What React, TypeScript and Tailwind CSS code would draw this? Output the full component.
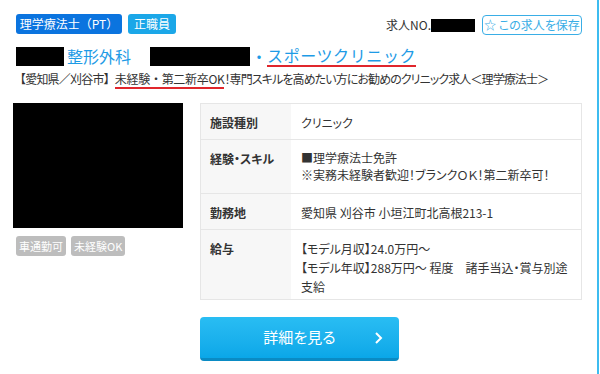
import React from "react";

const font = { fontFamily: '"Noto Sans CJK JP", "Noto Sans", sans-serif' };

function Row({ label, children, h }: { label: string; children: React.ReactNode; h: string }) {
  return (
    <div className={`flex border-b border-[#e6e6e6] last:border-b-0 ${h}`}>
      <div className="w-[90px] shrink-0 bg-[#f7f7f7] pl-[9px] pt-[9px] text-[12px] font-bold leading-[19px] text-[#333]">
        {label}
      </div>
      <div className="flex-1 pl-[10px] pt-[9px] text-[12px] leading-[19px] text-[#333]">{children}</div>
    </div>
  );
}

export default function App() {
  return (
    <div style={font} className="w-[600px] h-[374px] bg-white overflow-hidden [font-feature-settings:'palt']">
      <div className="w-[599px] h-[374px] border-r-2 border-[#3dbcf0] pl-[13px] pr-[15px] pt-[14px]">
        {/* header */}
        <div className="flex items-start justify-between pl-[3px]">
          <div className="flex gap-[6px]">
            <span className="inline-block h-[20px] w-[106px] rounded-[3px] bg-[#0b74df] text-center text-[12px] leading-[20px] text-white [font-feature-settings:normal]">
              理学療法士（PT）
            </span>
            <span className="inline-block h-[20px] w-[48px] rounded-[3px] bg-[#1ba7e8] text-center text-[12px] leading-[20px] text-white">
              正職員
            </span>
          </div>
          <div className="flex items-center gap-[7px] pt-[1px]">
            <div className="flex items-center text-[12px] text-[#333]">
              <span>求人NO.</span>
              <span className="inline-block h-[13px] w-[44px] bg-black" />
            </div>
            <button className="h-[20px] w-[100px] rounded-[4px] border border-[#3aaee6] bg-white text-center text-[12px] leading-[18px] text-[#3aaee6]">
              ☆ この求人を保存
            </button>
          </div>
        </div>

        {/* title */}
        <div className="mt-[10px] flex items-center pl-[3px] text-[16px] leading-[22px] text-[#1e9be6] [font-feature-settings:normal]">
          <span className="inline-block h-[19px] w-[48px] bg-black" />
          <span className="ml-[3px]">整形外科</span>
          <span className="ml-[19px] inline-block h-[19px] w-[100px] bg-black" />
          <span className="ml-[1px]">・</span>
          <span className="border-b-2 border-[#e0262c] leading-[20px] tracking-[0.6px]">スポーツクリニック</span>
        </div>

        {/* subtitle */}
        <div className="mt-[3px] pl-[1px] text-[12px] leading-[18px] text-[#333] whitespace-nowrap">
          <span className="tracking-[-0.8px]">
            <span className="[font-feature-settings:normal]">【</span>愛知県／刈谷市<span className="[font-feature-settings:normal]">】</span>
          </span>
          <span className="border-b-2 border-[#e0262c] tracking-[-0.3px]">
            未経験<span className="[font-feature-settings:normal]">・</span>第二新卒OK
          </span>
          <span className="tracking-[-0.9px]">！専門スキルを高めたい方にお勧めのクリニック求人＜理学療法士＞</span>
        </div>

        {/* main */}
        <div className="mt-[15px] flex gap-[17px]">
          <div className="w-[170px] shrink-0">
            <div className="h-[125px] w-[170px] bg-black" />
            <div className="mt-[8px] flex gap-[5px] pl-[3px]">
              <span className="inline-block h-[20px] rounded-[3px] bg-[#bdbdbd] px-[3px] text-[11px] leading-[20px] text-white">
                車通勤可
              </span>
              <span className="inline-block h-[20px] rounded-[3px] bg-[#bdbdbd] px-[3px] text-[11px] leading-[20px] text-white">
                未経験OK
              </span>
            </div>
          </div>
          <div className="flex w-[382px] flex-col">
            <div className="border border-[#e6e6e6]">
              <Row label="施設種別" h="h-[36px]">
                クリニック
              </Row>
              <Row label="経験・スキル" h="h-[54px]">
                <div className="leading-[17px]">■理学療法士免許</div>
                <div className="leading-[17px]">※実務未経験者歓迎！ブランクＯＫ！第二新卒可！</div>
              </Row>
              <Row label="勤務地" h="h-[36px]">
                愛知県 刈谷市 小垣江町北高根213-1
              </Row>
              <Row label="給与" h="h-[69px]">
                <div>【モデル月収】24.0万円～</div>
                <div>【モデル年収】288万円～ 程度　諸手当込・賞与別途</div>
                <div>支給</div>
              </Row>
            </div>
            <button className="relative mt-[17px] flex h-[44px] w-[199px] items-center justify-center rounded-[4px] border-b-[3px] border-[#0a8bc4] bg-gradient-to-b from-[#29bdf3] to-[#0aa7e8] text-[15px] text-white">
              <span>詳細を見る</span>
              <svg className="absolute right-[16px] top-[14px]" width="10" height="14" viewBox="0 0 10 14">
                <path d="M3 2 L8 7 L3 12" fill="none" stroke="white" strokeWidth="2" />
              </svg>
            </button>
          </div>
        </div>
      </div>
    </div>
  );
}
